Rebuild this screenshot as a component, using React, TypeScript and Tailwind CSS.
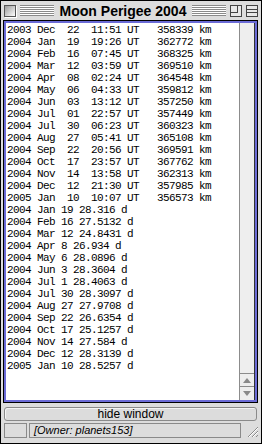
import React from "react";

const perigee = [
  "2003 Dec  22  11:51 UT   358339 km",
  "2004 Jan  19  19:26 UT   362772 km",
  "2004 Feb  16  07:45 UT   368325 km",
  "2004 Mar  12  03:59 UT   369510 km",
  "2004 Apr  08  02:24 UT   364548 km",
  "2004 May  06  04:33 UT   359812 km",
  "2004 Jun  03  13:12 UT   357250 km",
  "2004 Jul  01  22:57 UT   357449 km",
  "2004 Jul  30  06:23 UT   360323 km",
  "2004 Aug  27  05:41 UT   365108 km",
  "2004 Sep  22  20:56 UT   369591 km",
  "2004 Oct  17  23:57 UT   367762 km",
  "2004 Nov  14  13:58 UT   362313 km",
  "2004 Dec  12  21:30 UT   357985 km",
  "2005 Jan  10  10:07 UT   356573 km",
];

const intervals = [
  "2004 Jan 19 28.316 d",
  "2004 Feb 16 27.5132 d",
  "2004 Mar 12 24.8431 d",
  "2004 Apr 8 26.934 d",
  "2004 May 6 28.0896 d",
  "2004 Jun 3 28.3604 d",
  "2004 Jul 1 28.4063 d",
  "2004 Jul 30 28.3097 d",
  "2004 Aug 27 27.9708 d",
  "2004 Sep 22 26.6354 d",
  "2004 Oct 17 25.1257 d",
  "2004 Nov 14 27.584 d",
  "2004 Dec 12 28.3139 d",
  "2005 Jan 10 28.5257 d",
];

function Stripes() {
  return (
    <div className="flex-1 h-[11px] bg-[repeating-linear-gradient(to_bottom,#8a8a8a_0px,#8a8a8a_1px,#ffffff_1px,#ffffff_2px)]" />
  );
}

export default function App() {
  return (
    <div className="w-[262px] h-[444px] bg-[#dddddd] border border-black flex flex-col font-['Liberation_Sans',sans-serif] overflow-hidden">
      {/* title bar */}
      <div className="h-[19px] flex items-center pl-[3px] pr-[3px] gap-[4px]">
        <div className="w-[12px] h-[12px] border border-[#555] bg-[linear-gradient(135deg,#9a9a9a,#ffffff)] shadow-[1px_1px_0_#fff]" />
        <Stripes />
        <div className="text-[14px] font-bold leading-none px-[2px] text-black">Moon Perigee 2004</div>
        <Stripes />
        <div className="w-[12px] h-[12px] border border-[#444] bg-[#e8e8e8] relative">
          <div className="absolute left-0 top-0 w-[7px] h-[7px] border-r border-b border-[#444]" />
        </div>
        <div className="w-[12px] h-[12px] border border-[#444] bg-[#e8e8e8] flex flex-col justify-center gap-[2px] px-0">
          <div className="h-px bg-[#444]" />
          <div className="h-px bg-[#444]" />
        </div>
      </div>

      {/* text area */}
      <div className="ml-[2px] mr-[3px] h-[383px] border border-black">
        <div className="h-full border-2 border-[#6b6bd6] flex bg-white">
          <div className="flex-1 pl-[1px] pt-[1px] overflow-hidden">
            <pre className="font-['Liberation_Mono',monospace] text-[11px] leading-[12px] tracking-[-0.6px] text-black">
              {[...perigee, ...intervals].join("\n")}
            </pre>
          </div>
          <div className="w-[16px] bg-[#eeeeee] border-l border-[#8c8c8c] border-r border-r-[#333] flex flex-col justify-end">
            <div className="h-[13px] border-t border-[#8c8c8c] flex items-center justify-center">
              <svg width="8" height="5" viewBox="0 0 8 5">
                <polygon points="4,0 8,5 0,5" fill="#8a8a8a" />
              </svg>
            </div>
            <div className="h-[14px] border-t border-[#8c8c8c] flex items-center justify-center">
              <svg width="8" height="5" viewBox="0 0 8 5">
                <polygon points="0,0 8,0 4,5" fill="#8a8a8a" />
              </svg>
            </div>
          </div>
        </div>
      </div>

      {/* button */}
      <div className="ml-[3px] mr-[4px] mt-[4px] h-[14px] rounded-[3px] border border-[#8a8a8a] bg-[#dcdcdc] shadow-[inset_1px_1px_0_#f4f4f4] flex items-center justify-center text-[12px] leading-none text-black">
        hide window
      </div>

      {/* status bar */}
      <div className="mt-[2px] ml-[3px] mr-[2px] h-[15px] flex gap-[2px]">
        <div className="w-[23px] border border-[#8a8a8a] bg-[#dddddd]" />
        <div className="flex-1 border border-[#8a8a8a] bg-[#dddddd] flex items-center pl-[4px] text-[11px] italic leading-none text-black">
          [Owner: planets153]
        </div>
        <div className="w-[16px] flex items-end justify-end">
          <svg width="14" height="14" viewBox="0 0 14 14">
            <line x1="13" y1="3" x2="3" y2="13" stroke="#8a8a8a" strokeWidth="1" />
            <line x1="13" y1="4" x2="4" y2="13" stroke="#ffffff" strokeWidth="1" />
            <line x1="13" y1="7" x2="7" y2="13" stroke="#8a8a8a" strokeWidth="1" />
            <line x1="13" y1="8" x2="8" y2="13" stroke="#ffffff" strokeWidth="1" />
            <line x1="13" y1="11" x2="11" y2="13" stroke="#8a8a8a" strokeWidth="1" />
          </svg>
        </div>
      </div>
    </div>
  );
}
